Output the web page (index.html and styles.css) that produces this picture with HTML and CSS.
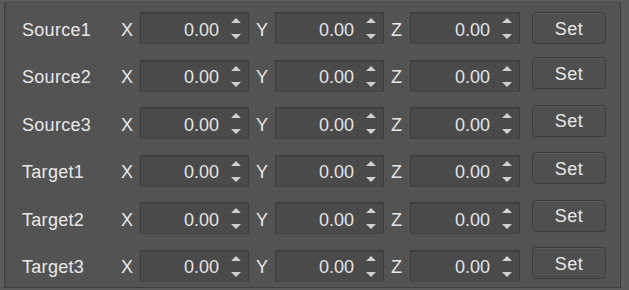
FILE: index.html
```html
<!DOCTYPE html>
<html>
<head>
<meta charset="utf-8">
<link rel="stylesheet" href="styles.css">
</head>
<body>
<div class="panel">
  <div class="row">
    <span class="name">Source1</span>
    <span class="axis">X</span><div class="spin"><span class="val">0.00</span><span class="arrows"><svg width="12" height="22" viewBox="0 0 12 22"><path d="M6 0 L11 5 L1 5 Z M1 6 H11" class="ar"/><path d="M1 15 H11 M1 16 L11 16 L6 21 Z" class="ar"/></svg></span></div>
    <span class="axis">Y</span><div class="spin"><span class="val">0.00</span><span class="arrows"><svg width="12" height="22" viewBox="0 0 12 22"><path d="M6 0 L11 5 L1 5 Z M1 6 H11" class="ar"/><path d="M1 15 H11 M1 16 L11 16 L6 21 Z" class="ar"/></svg></span></div>
    <span class="axis">Z</span><div class="spin wide"><span class="val">0.00</span><span class="arrows"><svg width="12" height="22" viewBox="0 0 12 22"><path d="M6 0 L11 5 L1 5 Z M1 6 H11" class="ar"/><path d="M1 15 H11 M1 16 L11 16 L6 21 Z" class="ar"/></svg></span></div>
    <button class="set">Set</button>
  </div>
  <div class="row">
    <span class="name">Source2</span>
    <span class="axis">X</span><div class="spin"><span class="val">0.00</span><span class="arrows"><svg width="12" height="22" viewBox="0 0 12 22"><path d="M6 0 L11 5 L1 5 Z M1 6 H11" class="ar"/><path d="M1 15 H11 M1 16 L11 16 L6 21 Z" class="ar"/></svg></span></div>
    <span class="axis">Y</span><div class="spin"><span class="val">0.00</span><span class="arrows"><svg width="12" height="22" viewBox="0 0 12 22"><path d="M6 0 L11 5 L1 5 Z M1 6 H11" class="ar"/><path d="M1 15 H11 M1 16 L11 16 L6 21 Z" class="ar"/></svg></span></div>
    <span class="axis">Z</span><div class="spin wide"><span class="val">0.00</span><span class="arrows"><svg width="12" height="22" viewBox="0 0 12 22"><path d="M6 0 L11 5 L1 5 Z M1 6 H11" class="ar"/><path d="M1 15 H11 M1 16 L11 16 L6 21 Z" class="ar"/></svg></span></div>
    <button class="set up">Set</button>
  </div>
  <div class="row">
    <span class="name">Source3</span>
    <span class="axis">X</span><div class="spin"><span class="val">0.00</span><span class="arrows"><svg width="12" height="22" viewBox="0 0 12 22"><path d="M6 0 L11 5 L1 5 Z M1 6 H11" class="ar"/><path d="M1 15 H11 M1 16 L11 16 L6 21 Z" class="ar"/></svg></span></div>
    <span class="axis">Y</span><div class="spin"><span class="val">0.00</span><span class="arrows"><svg width="12" height="22" viewBox="0 0 12 22"><path d="M6 0 L11 5 L1 5 Z M1 6 H11" class="ar"/><path d="M1 15 H11 M1 16 L11 16 L6 21 Z" class="ar"/></svg></span></div>
    <span class="axis">Z</span><div class="spin wide"><span class="val">0.00</span><span class="arrows"><svg width="12" height="22" viewBox="0 0 12 22"><path d="M6 0 L11 5 L1 5 Z M1 6 H11" class="ar"/><path d="M1 15 H11 M1 16 L11 16 L6 21 Z" class="ar"/></svg></span></div>
    <button class="set up">Set</button>
  </div>
  <div class="row">
    <span class="name">Target1</span>
    <span class="axis">X</span><div class="spin"><span class="val">0.00</span><span class="arrows"><svg width="12" height="22" viewBox="0 0 12 22"><path d="M6 0 L11 5 L1 5 Z M1 6 H11" class="ar"/><path d="M1 15 H11 M1 16 L11 16 L6 21 Z" class="ar"/></svg></span></div>
    <span class="axis">Y</span><div class="spin"><span class="val">0.00</span><span class="arrows"><svg width="12" height="22" viewBox="0 0 12 22"><path d="M6 0 L11 5 L1 5 Z M1 6 H11" class="ar"/><path d="M1 15 H11 M1 16 L11 16 L6 21 Z" class="ar"/></svg></span></div>
    <span class="axis">Z</span><div class="spin wide"><span class="val">0.00</span><span class="arrows"><svg width="12" height="22" viewBox="0 0 12 22"><path d="M6 0 L11 5 L1 5 Z M1 6 H11" class="ar"/><path d="M1 15 H11 M1 16 L11 16 L6 21 Z" class="ar"/></svg></span></div>
    <button class="set up">Set</button>
  </div>
  <div class="row">
    <span class="name">Target2</span>
    <span class="axis">X</span><div class="spin"><span class="val">0.00</span><span class="arrows"><svg width="12" height="22" viewBox="0 0 12 22"><path d="M6 0 L11 5 L1 5 Z M1 6 H11" class="ar"/><path d="M1 15 H11 M1 16 L11 16 L6 21 Z" class="ar"/></svg></span></div>
    <span class="axis">Y</span><div class="spin"><span class="val">0.00</span><span class="arrows"><svg width="12" height="22" viewBox="0 0 12 22"><path d="M6 0 L11 5 L1 5 Z M1 6 H11" class="ar"/><path d="M1 15 H11 M1 16 L11 16 L6 21 Z" class="ar"/></svg></span></div>
    <span class="axis">Z</span><div class="spin wide"><span class="val">0.00</span><span class="arrows"><svg width="12" height="22" viewBox="0 0 12 22"><path d="M6 0 L11 5 L1 5 Z M1 6 H11" class="ar"/><path d="M1 15 H11 M1 16 L11 16 L6 21 Z" class="ar"/></svg></span></div>
    <button class="set up">Set</button>
  </div>
  <div class="row">
    <span class="name">Target3</span>
    <span class="axis">X</span><div class="spin"><span class="val">0.00</span><span class="arrows"><svg width="12" height="22" viewBox="0 0 12 22"><path d="M6 0 L11 5 L1 5 Z M1 6 H11" class="ar"/><path d="M1 15 H11 M1 16 L11 16 L6 21 Z" class="ar"/></svg></span></div>
    <span class="axis">Y</span><div class="spin"><span class="val">0.00</span><span class="arrows"><svg width="12" height="22" viewBox="0 0 12 22"><path d="M6 0 L11 5 L1 5 Z M1 6 H11" class="ar"/><path d="M1 15 H11 M1 16 L11 16 L6 21 Z" class="ar"/></svg></span></div>
    <span class="axis">Z</span><div class="spin wide"><span class="val">0.00</span><span class="arrows"><svg width="12" height="22" viewBox="0 0 12 22"><path d="M6 0 L11 5 L1 5 Z M1 6 H11" class="ar"/><path d="M1 15 H11 M1 16 L11 16 L6 21 Z" class="ar"/></svg></span></div>
    <button class="set up">Set</button>
  </div>
</div>
</body>
</html>
```
FILE: styles.css
```css
html, body {
  margin: 0;
  padding: 0;
  background: #5b5b5b;
  width: 629px;
  height: 290px;
  overflow: hidden;
}
body {
  padding: 2px 0 0 4px;
  box-sizing: border-box;
  font-family: "Liberation Sans", Arial, sans-serif;
  font-size: 18px;
  color: #e8e8e8;
}
.panel {
  width: 617px;
  height: 286px;
  box-sizing: border-box;
  background: #535353;
  border-left: 1px solid #3f3f3f;
  border-right: 1px solid #3f3f3f;
  border-bottom: 1px solid #3f3f3f;
  border-top: 1px solid #4a4a4a;
  box-shadow: inset 2px 0 0 #4d4d4d;
  padding: 9px 0 0 17px;
  display: flex;
  flex-direction: column;
  gap: 15.6px;
}
.row {
  display: flex;
  align-items: center;
  height: 32px;
}
.name {
  width: 92px;
  letter-spacing: 0.3px;
  padding-top: 4px;
}
.axis {
  width: 26px;
  box-sizing: border-box;
  padding-left: 7px;
  padding-top: 4px;
}
.spin {
  width: 109px;
  height: 32px;
  box-sizing: border-box;
  background: #4a4a4a;
  border: 1px solid #3c3c3c;
  border-bottom-color: #444444;
  box-shadow: inset 0 1px 0 #424242;
  display: flex;
  align-items: center;
  justify-content: flex-end;
}
.spin.wide {
  width: 110px;
}
.val {
  padding-top: 4px;
  color: #e4e4e4;
}
.arrows {
  width: 29px;
  display: flex;
  justify-content: center;
  padding-left: 5px;
  padding-top: 2px;
  box-sizing: border-box;
}
.ar {
  fill: #cfcfcf;
}
.set {
  margin-left: 12px;
  width: 74px;
  height: 32px;
  box-sizing: border-box;
  border: 1px solid #3b3b3b;
  border-radius: 4px;
  background: #4f4f4f;
  box-shadow: inset 0 1px 0 #5a5a5a;
  color: #e8e8e8;
  font-family: "Liberation Sans", Arial, sans-serif;
  font-size: 18px;
  padding: 2px 0 0 0;
  letter-spacing: 0.5px;
}
.set.up {
  margin-top: -5px;
}
```
